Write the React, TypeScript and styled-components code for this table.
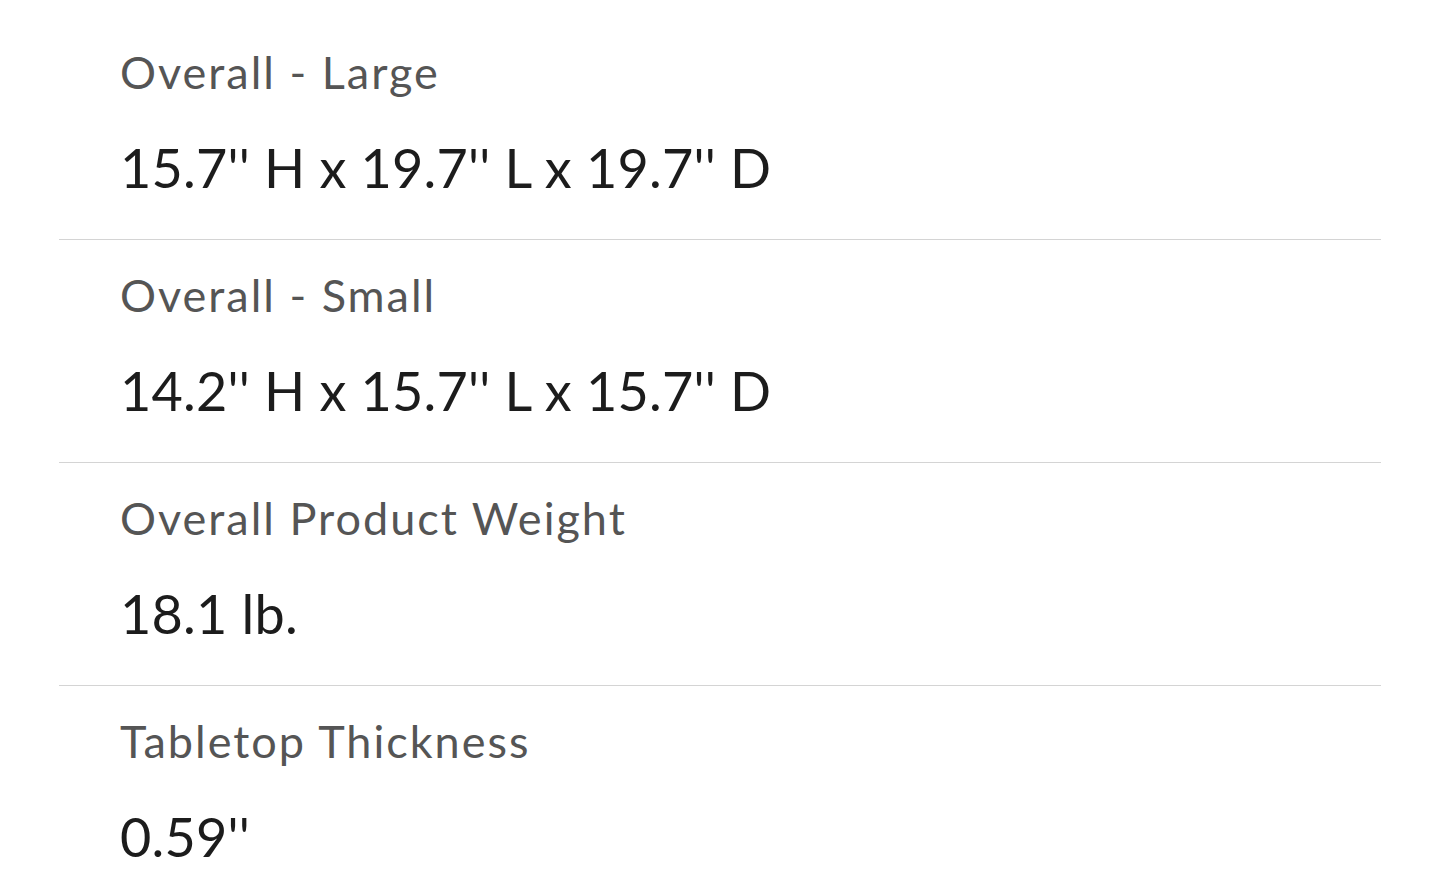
import React from "react";
import styled, { createGlobalStyle } from "styled-components";

const Global = createGlobalStyle`
  html, body { margin: 0; padding: 0; background: #ffffff; }
  body { font-family: Lato, "Liberation Sans", sans-serif; }
`;

const List = styled.div`
  display: flex;
  flex-direction: column;
  padding: 17px 59px 0;
`;

const Row = styled.div`
  display: flex;
  flex-direction: column;
  height: 222px;
  border-bottom: 1px solid #d4d4d4;
  padding-left: 61px;
  box-sizing: content-box;
`;

const Label = styled.div`
  margin-top: 28px;
  font-size: 45px;
  line-height: 54px;
  letter-spacing: 2px;
  color: #555555;
  font-weight: 400;
`;

const Value = styled.div`
  margin-top: 37px;
  font-size: 54px;
  line-height: 64px;
  letter-spacing: 0.2px;
  color: #1c1c1c;
  font-weight: 400;
`;

const rows = [
  { label: "Overall - Large", value: "15.7'' H x 19.7'' L x 19.7'' D" },
  { label: "Overall - Small", value: "14.2'' H x 15.7'' L x 15.7'' D" },
  { label: "Overall Product Weight", value: "18.1 lb." },
  { label: "Tabletop Thickness", value: "0.59''" },
];

export default function App() {
  return (
    <>
      <Global />
      <List>
        {rows.map((r, i) => (
          <Row key={i}>
            <Label>{r.label}</Label>
            <Value>{r.value}</Value>
          </Row>
        ))}
      </List>
    </>
  );
}
